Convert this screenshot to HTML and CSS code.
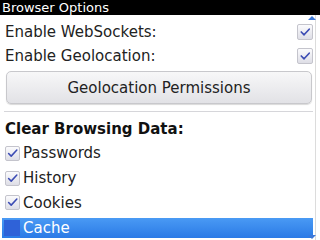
FILE: index.html
```html
<!DOCTYPE html>
<html lang="en">
<head>
  <meta charset="UTF-8" />
  <title>Browser Options</title>
  <link rel="stylesheet" href="styles.css">
</head>
<body>
  <div class="titlebar">Browser Options</div>

  <div class="screen">
    <div class="panel">
      <div class="row">
        <span>Enable WebSockets:</span>
        <span class="box big">
          <svg viewBox="0 0 15 15"><path d="M3.5 7.5 L6.5 10.5 L12 4.5" /></svg>
        </span>
      </div>
      <div class="row">
        <span>Enable Geolocation:</span>
        <span class="box big">
          <svg viewBox="0 0 15 15"><path d="M3.5 7.5 L6.5 10.5 L12 4.5" /></svg>
        </span>
      </div>

      <button class="btn">Geolocation Permissions</button>

      <div class="sep"></div>

      <div class="heading">Clear Browsing Data:</div>

      <div class="item">
        <span class="box">
          <svg viewBox="0 0 15 15"><path d="M3 7.5 L6 10.5 L12.5 3.5" /></svg>
        </span>
        Passwords
      </div>
      <div class="item">
        <span class="box">
          <svg viewBox="0 0 15 15"><path d="M3 7.5 L6 10.5 L12.5 3.5" /></svg>
        </span>
        History
      </div>
      <div class="item">
        <span class="box">
          <svg viewBox="0 0 15 15"><path d="M3 7.5 L6 10.5 L12.5 3.5" /></svg>
        </span>
        Cookies
      </div>
      <div class="item selected">
        <span class="box"></span>
        Cache
      </div>
    </div>

    <!-- scroll arrows -->
    <span class="arrow up"></span>
    <span class="arrow down"></span>
  </div>
</body>
</html>
```

FILE: styles.css
```css
body {
  margin: 0;
  width: 320px;
  height: 240px;
  overflow: hidden;
  background: #fff;
  font-family: "DejaVu Sans", sans-serif;
  color: #222;
}

.titlebar {
  height: 15px;
  line-height: 15px;
  background: #000;
  color: #fff;
  font-size: 13px;
  padding-left: 2px;
}

.screen {
  position: relative;
  height: 225px;
}

.panel {
  height: 225px;
  margin-right: 4px;
  border-right: 1px solid #dcdcdc;
  padding: 5px 2px 0 4px;
  box-sizing: border-box;
  display: flex;
  flex-direction: column;
}

.row {
  height: 24px;
  display: flex;
  align-items: center;
  justify-content: space-between;
  font-size: 15px;
  padding-left: 1px;
}

.box {
  width: 15px;
  height: 15px;
  flex: none;
  border: 1px solid #c4c4cc;
  border-radius: 2px;
  background: linear-gradient(#fbfbfd, #dedee6);
  display: inline-flex;
  box-sizing: border-box;
}

.box svg {
  width: 100%;
  height: 100%;
  overflow: visible;
}

.box path {
  fill: none;
  stroke: #3c4cb4;
  stroke-width: 1.8;
  stroke-linecap: round;
  stroke-linejoin: round;
}

.box.big {
  width: 16px;
  height: 16px;
}

.btn {
  margin: 3px 0 0 2px;
  height: 33px;
  width: 306px;
  border: 1px solid #c8c8cc;
  border-radius: 5px;
  background: linear-gradient(#f7f7f8, #e2e2e6);
  font-family: "DejaVu Sans", sans-serif;
  font-size: 15px;
  color: #222;
  box-shadow: 0 1px 1px rgba(0, 0, 0, 0.15);
}

.sep {
  margin: 7px 0 0 0;
  height: 1px;
  background: #d6d6da;
}

.heading {
  height: 24px;
  margin-top: 5px;
  display: flex;
  align-items: center;
  font-size: 15px;
  font-weight: bold;
  color: #111;
  padding-left: 1px;
}

.item {
  height: 24.8px;
  display: flex;
  align-items: center;
  gap: 3px;
  font-size: 15px;
}

.item .box {
  margin-left: 1px;
}

.item.selected {
  height: 20px;
  margin: 3px 0 0 -2px;
  padding-left: 2px;
  background: linear-gradient(#4a9af4, #2a7ae6);
  color: #fff;
}

.item.selected .box {
  width: 16px;
  height: 16px;
  margin-left: 0;
  border: none;
  border-radius: 0;
  background: #2f62d8;
}

.arrow {
  position: absolute;
  right: 4px;
  width: 0;
  height: 0;
  border-left: 4px solid transparent;
  border-right: 4px solid transparent;
}

.arrow.up {
  top: 1px;
  border-bottom: 4px solid #3d78d8;
}

.arrow.down {
  bottom: 1px;
  border-top: 4px solid #3d78d8;
}
```
